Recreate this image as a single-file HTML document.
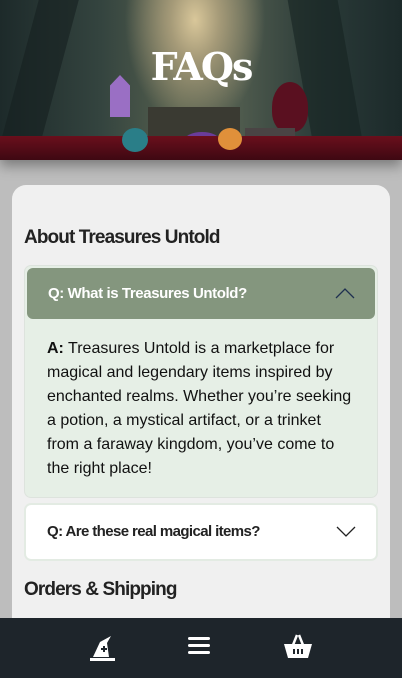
<!DOCTYPE html>
<html><head><meta charset="utf-8"><style>
*{box-sizing:border-box;margin:0;padding:0}
html,body{width:402px;height:678px;overflow:hidden}
body{background:#bdbdbd;font-family:"Liberation Sans",sans-serif;position:relative}
.hero{position:absolute;left:0;top:0;width:402px;height:160px;overflow:hidden;box-shadow:0 6px 12px rgba(0,0,0,.35);
background:radial-gradient(ellipse 70px 110px at 195px 20px,#d9c79a 0%,#a59a78 35%,rgba(70,80,70,0) 100%),linear-gradient(90deg,#1d2a2a 0%,#34443f 25%,#56604e 45%,#4e5a4d 60%,#2a3a38 80%,#1c2a2a 100%)}
.table{position:absolute;left:0;top:136px;width:402px;height:24px;background:linear-gradient(180deg,#6a0f1c,#3e0812)}
.t{position:absolute;left:0;right:0;top:44px;text-align:center;color:#fff;font-family:"DejaVu Serif",serif;font-weight:bold;font-size:38px;letter-spacing:-2px}
.card{position:absolute;left:12px;top:185px;width:378px;height:480px;background:#f0f0f0;border-radius:14px}
h2{position:absolute;left:24px;font-size:19px;font-weight:bold;color:#222;letter-spacing:-0.9px}
.acc{position:absolute;left:24px;top:265px;width:354px;height:233px;background:#e6efe6;border:1px solid #dde3dd;border-radius:7px}
.qh{position:absolute;left:2px;top:2px;width:348px;height:51px;background:#84967e;border-radius:6px;color:#fff;font-weight:bold;font-size:15px;padding:17px 0 0 21px;letter-spacing:-0.4px}
.ans{position:absolute;left:22px;top:71px;width:310px;font-size:16px;line-height:24px;color:#111}
.q2{position:absolute;left:24px;top:503px;width:354px;height:58px;background:#fff;border:2px solid #e3ebe3;border-radius:7px;font-weight:bold;font-size:15px;color:#222;padding:18px 0 0 21px;letter-spacing:-0.6px}
.nav{position:absolute;left:0;top:618px;width:402px;height:60px;background:#1e252b}
</style></head><body>
<div class="hero">
<div style="position:absolute;left:20px;top:0;width:40px;height:140px;background:#15201f;opacity:.6;transform:skewX(-15deg)"></div>
<div style="position:absolute;left:300px;top:0;width:50px;height:140px;background:#152322;opacity:.6;transform:skewX(10deg)"></div>
<div style="position:absolute;left:110px;top:75px;width:20px;height:42px;background:#9a6fc4;clip-path:polygon(50% 0,100% 25%,100% 100%,0 100%,0 25%)"></div>
<div style="position:absolute;left:148px;top:107px;width:92px;height:30px;background:#3a3a32"></div>
<div style="position:absolute;left:272px;top:82px;width:36px;height:50px;background:#5a1020;border-radius:50% 50% 40% 40%"></div>
<div style="position:absolute;left:245px;top:128px;width:50px;height:24px;background:#4a4444"></div>
<div style="position:absolute;left:184px;top:132px;width:36px;height:18px;background:#6a3c9a;border-radius:50%"></div>
<div class="table"></div>
<div style="position:absolute;left:122px;top:128px;width:26px;height:24px;background:#2a7e88;border-radius:50%"></div>
<div style="position:absolute;left:218px;top:128px;width:24px;height:22px;background:#e0903a;border-radius:50%"></div>
<div class="t">FAQs</div>
</div>
<div class="card"></div>
<h2 style="top:227px">About Treasures Untold</h2>
<div class="acc">
<div class="qh">Q: What is Treasures Untold?
<svg style="position:absolute;right:20px;top:19px" width="20" height="12" viewBox="0 0 20 12"><path d="M1 11L10 2l9 9" fill="none" stroke="#1f3050" stroke-width="1.3"/></svg></div>
<div class="ans"><b>A:</b> Treasures Untold is a marketplace for magical and legendary items inspired by enchanted realms. Whether you’re seeking a potion, a mystical artifact, or a trinket from a faraway kingdom, you’ve come to the right place!</div>
</div>
<div class="q2">Q: Are these real magical items?
<svg style="position:absolute;right:20px;top:21px" width="20" height="12" viewBox="0 0 20 12"><path d="M1 1l9 9 9-9" fill="none" stroke="#222" stroke-width="1.3"/></svg></div>
<h2 style="top:579px">Orders &amp; Shipping</h2>
<div class="nav">
<svg style="position:absolute;left:90px;top:15px" width="26" height="28" viewBox="0 0 26 28"><path d="M3 24L10 9 21 3 17 10 19 24Z" fill="#fff"/><path d="M11 16h6M14 13v6" stroke="#1e252b" stroke-width="2"/><rect x="0" y="25" width="25" height="3" fill="#fff"/></svg>
<svg style="position:absolute;left:188px;top:18px" width="22" height="20" viewBox="0 0 22 20"><rect x="0" y="1" width="22" height="3" rx="1.5" fill="#fff"/><rect x="0" y="8" width="22" height="3" rx="1.5" fill="#fff"/><rect x="0" y="15" width="22" height="3" rx="1.5" fill="#fff"/></svg>
<svg style="position:absolute;left:284px;top:15px" width="28" height="26" viewBox="0 0 28 26"><path d="M9 12L13 2M19 12L15 2" stroke="#fff" stroke-width="2.5" fill="none"/><path d="M0 11h28l-4 14H4Z" fill="#fff"/><path d="M10 16v5M14 16v5M18 16v5" stroke="#1e252b" stroke-width="2"/></svg>
</div>
</body></html>
